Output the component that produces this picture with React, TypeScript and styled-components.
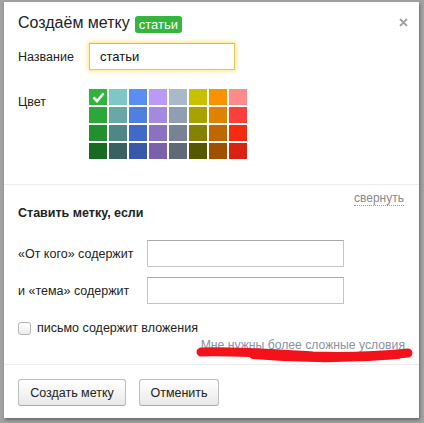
import React from 'react';
import styled, { createGlobalStyle } from 'styled-components';

const palette: string[][] = [
  ['#2fb53c', '#7fc6c6', '#5b8ef5', '#b99bf7', '#a9b9c9', '#c9c000', '#fa9200', '#fd8b8b'],
  ['#2ca83a', '#6aa7a7', '#4f80e0', '#a38ae0', '#8f9fb1', '#a8a100', '#e08100', '#fc3f3a'],
  ['#22902f', '#508686', '#4169c9', '#8a72c1', '#778394', '#868100', '#c26700', '#f42b12'],
  ['#176b22', '#3a6161', '#3858a9', '#7b61a9', '#5f6a78', '#575700', '#a05100', '#d92212'],
];

const GlobalStyle = createGlobalStyle`
  body {
    margin: 0;
    background: #a2a2a2;
    font-family: "Liberation Sans", Arial, sans-serif;
  }
`;

const Page = styled.div`
  width: 424px;
  height: 423px;
  padding: 2px 5px 0 4px;
  box-sizing: border-box;
  overflow: hidden;
`;

const Dialog = styled.div`
  position: relative;
  width: 415px;
  height: 416px;
  background: #fff;
  box-shadow: 1px 2px 3px rgba(0, 0, 0, 0.35);
  display: flex;
  flex-direction: column;
`;

const Close = styled.div`
  position: absolute;
  top: 11px;
  right: 11px;
  width: 9px;
  height: 9px;
`;

const Top = styled.div`
  padding: 10px 14px 0;
  height: 182px;
  box-sizing: border-box;
`;

const Title = styled.div`
  display: flex;
  align-items: center;
  gap: 5px;
  font-size: 16px;
  line-height: 22px;
  color: #222;
`;

const Badge = styled.span`
  background: #34b53e;
  color: #fff;
  font-size: 13px;
  line-height: 17px;
  padding: 0 4px;
  border-radius: 3px;
  margin-top: 2px;
`;

const Row = styled.div<{ $label: number; $top: number }>`
  display: grid;
  grid-template-columns: ${(p) => p.$label}px auto;
  align-items: center;
  margin-top: ${(p) => p.$top}px;
`;

const Label = styled.span<{ $self?: string; $offset?: number }>`
  font-size: 12.5px;
  color: #222;
  align-self: ${(p) => p.$self || 'center'};
  margin-top: ${(p) => p.$offset || 0}px;
`;

const TextInput = styled.div<{ $focus?: boolean; $width: number }>`
  width: ${(p) => p.$width}px;
  height: 27px;
  box-sizing: border-box;
  border: 1px solid ${(p) => (p.$focus ? '#e3c75a' : '#c4c4c4')};
  border-top-color: ${(p) => (p.$focus ? '#d9bb48' : '#a9a9a9')};
  box-shadow: ${(p) => (p.$focus ? '0 0 4px 1px rgba(255, 214, 60, 0.7)' : 'none')};
  padding: 0 10px;
  font-size: 13px;
  line-height: 25px;
  color: #111;
`;

const Swatches = styled.div`
  display: grid;
  grid-template-columns: repeat(8, 18px);
  grid-auto-rows: 16px;
  gap: 2px;
`;

const Swatch = styled.div<{ $color: string }>`
  background: ${(p) => p.$color};
  display: flex;
  align-items: center;
  justify-content: center;
`;

const Divider = styled.div`
  height: 1px;
  background: #ececec;
`;

const Middle = styled.div`
  padding: 6px 14px 0;
  height: 179px;
  box-sizing: border-box;
  position: relative;
`;

const Collapse = styled.div`
  text-align: right;
  font-size: 12px;
  line-height: 14px;
  margin-right: 1px;
`;

const DottedLink = styled.span`
  color: #8a8a8a;
  border-bottom: 1px dotted #9a9a9a;
`;

const Heading = styled.div`
  font-size: 12.5px;
  font-weight: bold;
  color: #222;
  margin-top: 1px;
`;

const CheckRow = styled.label`
  display: flex;
  align-items: center;
  gap: 6px;
  margin-top: 17px;
  font-size: 12.5px;
  color: #222;
`;

const Box = styled.span`
  width: 13px;
  height: 13px;
  box-sizing: border-box;
  border: 1px solid #b5b5b5;
  border-radius: 3px;
  background: linear-gradient(#fff, #ececec);
`;

const More = styled.div`
  text-align: right;
  margin-top: 3px;
  margin-right: 0px;
  font-size: 12.2px;
  line-height: 15px;
`;

const MoreLink = styled.span`
  color: #8c90a6;
  border-bottom: 1px solid #b3b6c4;
`;

const Scribble = styled.svg`
  position: absolute;
  left: 189px;
  top: 160px;
`;

const Footer = styled.div`
  display: flex;
  gap: 13px;
  padding: 14px 14px 0;
`;

const Button = styled.button<{ $width: number }>`
  width: ${(p) => p.$width}px;
  height: 27px;
  border: 1px solid #bdbdbd;
  border-bottom-color: #a9a9a9;
  border-radius: 3px;
  background: linear-gradient(#ffffff, #e9e9e9);
  font-family: "Liberation Sans", Arial, sans-serif;
  font-size: 12.5px;
  color: #222;
  padding: 0;
`;

export default function App() {
  return (
    <>
      <GlobalStyle />
      <Page>
        <Dialog>
          <Close>
            <svg width="9" height="9" viewBox="0 0 9 9">
              <path d="M1 1L8 8M8 1L1 8" stroke="#a0a0a0" strokeWidth="1.8" />
            </svg>
          </Close>
          <Top>
            <Title>
              Создаём метку <Badge>статьи</Badge>
            </Title>
            <Row $label={71} $top={9}>
              <Label>Название</Label>
              <TextInput $focus $width={146}>статьи</TextInput>
            </Row>
            <Row $label={71} $top={19}>
              <Label $self="start" $offset={6}>Цвет</Label>
              <Swatches>
                {palette.map((row, r) =>
                  row.map((c, i) => (
                    <Swatch key={`${r}-${i}`} $color={c}>
                      {r === 0 && i === 0 && (
                        <svg width="13" height="11" viewBox="0 0 13 11">
                          <path d="M1.5 5.5L5 9L11.5 1.5" stroke="#fff" strokeWidth="2.6" fill="none" />
                        </svg>
                      )}
                    </Swatch>
                  ))
                )}
              </Swatches>
            </Row>
          </Top>
          <Divider />
          <Middle>
            <Collapse>
              <DottedLink>свернуть</DottedLink>
            </Collapse>
            <Heading>Ставить метку, если</Heading>
            <Row $label={129} $top={20}>
              <Label>«От кого» содержит</Label>
              <TextInput $width={197} />
            </Row>
            <Row $label={129} $top={10}>
              <Label>и «тема» содержит</Label>
              <TextInput $width={197} />
            </Row>
            <CheckRow>
              <Box />
              письмо содержит вложения
            </CheckRow>
            <More>
              <MoreLink>Мне нужны более сложные условия</MoreLink>
            </More>
            <Scribble width="224" height="20" viewBox="0 0 224 20">
              <path
                d="M8 7 C45 6, 85 9, 120 11 C150 12, 185 11, 215 8"
                stroke="#f4121a"
                strokeWidth="9"
                strokeLinecap="round"
                fill="none"
              />
              <path
                d="M60 11 C105 15, 160 15, 205 11"
                stroke="#f4121a"
                strokeWidth="6"
                strokeLinecap="round"
                fill="none"
              />
            </Scribble>
          </Middle>
          <Divider />
          <Footer>
            <Button $width={108}>Создать метку</Button>
            <Button $width={80}>Отменить</Button>
          </Footer>
        </Dialog>
      </Page>
    </>
  );
}
